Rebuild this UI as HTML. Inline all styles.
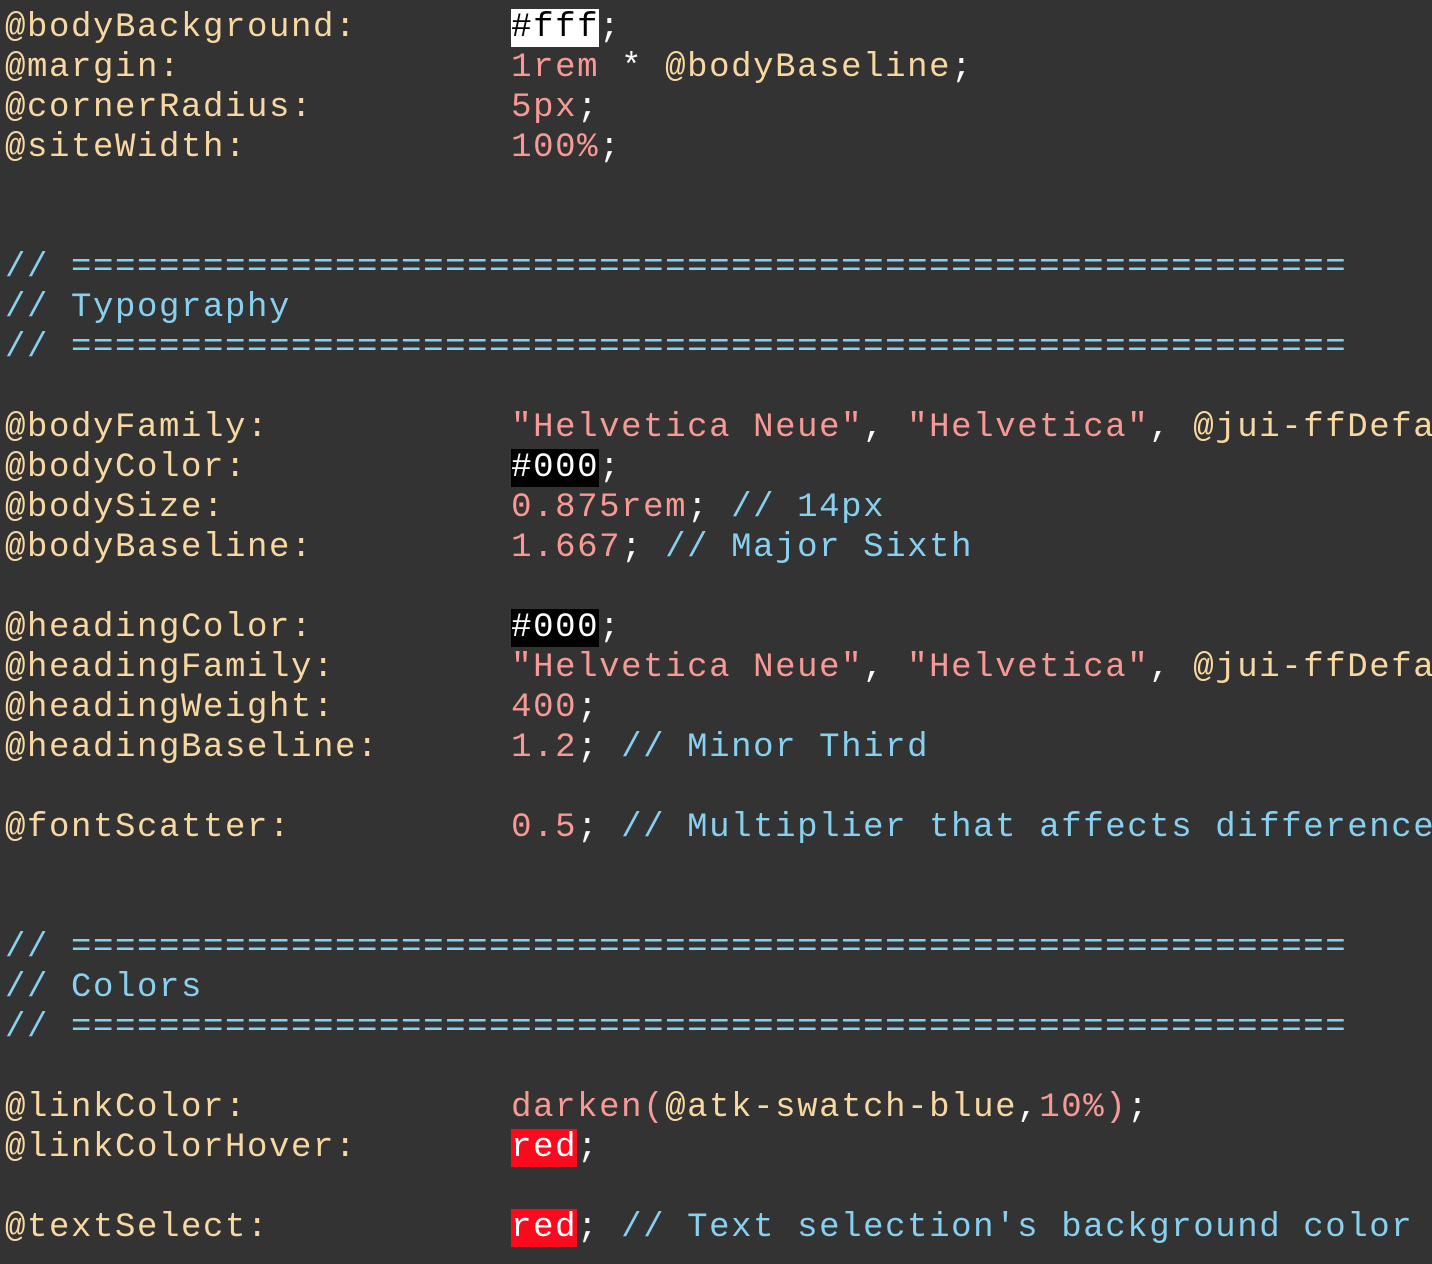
<!DOCTYPE html>
<html><head><meta charset="utf-8"><style>
html,body{margin:0;padding:0;background:#333333;width:1432px;height:1264px;overflow:hidden}
pre{margin:0;padding:8px 0 0 5px;font-family:"Liberation Mono","DejaVu Sans Mono",monospace;font-size:34px;letter-spacing:1.6px;line-height:40px;color:#fafafa;white-space:pre;overflow:hidden;width:1427px}
.k{color:#f8d8a2}.v{color:#f79a96}.c{color:#88d0ef}
.w{background:#fff;color:#000}.b{background:#000;color:#fff}.r{background:#fb0a1e;color:#fff}
</style></head><body><pre><span class="k">@bodyBackground:</span>       <span class="w">#fff</span>;
<span class="k">@margin:</span>               <span class="v">1rem</span> * <span class="k">@bodyBaseline</span>;
<span class="k">@cornerRadius:</span>         <span class="v">5px</span>;
<span class="k">@siteWidth:</span>            <span class="v">100%</span>;


<span class="c">// ==========================================================</span>
<span class="c">// Typography</span>
<span class="c">// ==========================================================</span>

<span class="k">@bodyFamily:</span>           <span class="v">"Helvetica Neue"</span>, <span class="v">"Helvetica"</span>, <span class="k">@jui-ffDefa</span>
<span class="k">@bodyColor:</span>            <span class="b">#000</span>;
<span class="k">@bodySize:</span>             <span class="v">0.875rem</span>; <span class="c">// 14px</span>
<span class="k">@bodyBaseline:</span>         <span class="v">1.667</span>; <span class="c">// Major Sixth</span>

<span class="k">@headingColor:</span>         <span class="b">#000</span>;
<span class="k">@headingFamily:</span>        <span class="v">"Helvetica Neue"</span>, <span class="v">"Helvetica"</span>, <span class="k">@jui-ffDefa</span>
<span class="k">@headingWeight:</span>        <span class="v">400</span>;
<span class="k">@headingBaseline:</span>      <span class="v">1.2</span>; <span class="c">// Minor Third</span>

<span class="k">@fontScatter:</span>          <span class="v">0.5</span>; <span class="c">// Multiplier that affects difference</span>


<span class="c">// ==========================================================</span>
<span class="c">// Colors</span>
<span class="c">// ==========================================================</span>

<span class="k">@linkColor:</span>            <span class="v">darken(</span><span class="k">@atk-swatch-blue</span>,<span class="v">10%)</span>;
<span class="k">@linkColorHover:</span>       <span class="r">red</span>;

<span class="k">@textSelect:</span>           <span class="r">red</span>; <span class="c">// Text selection's background color</span>
</pre></body></html>
